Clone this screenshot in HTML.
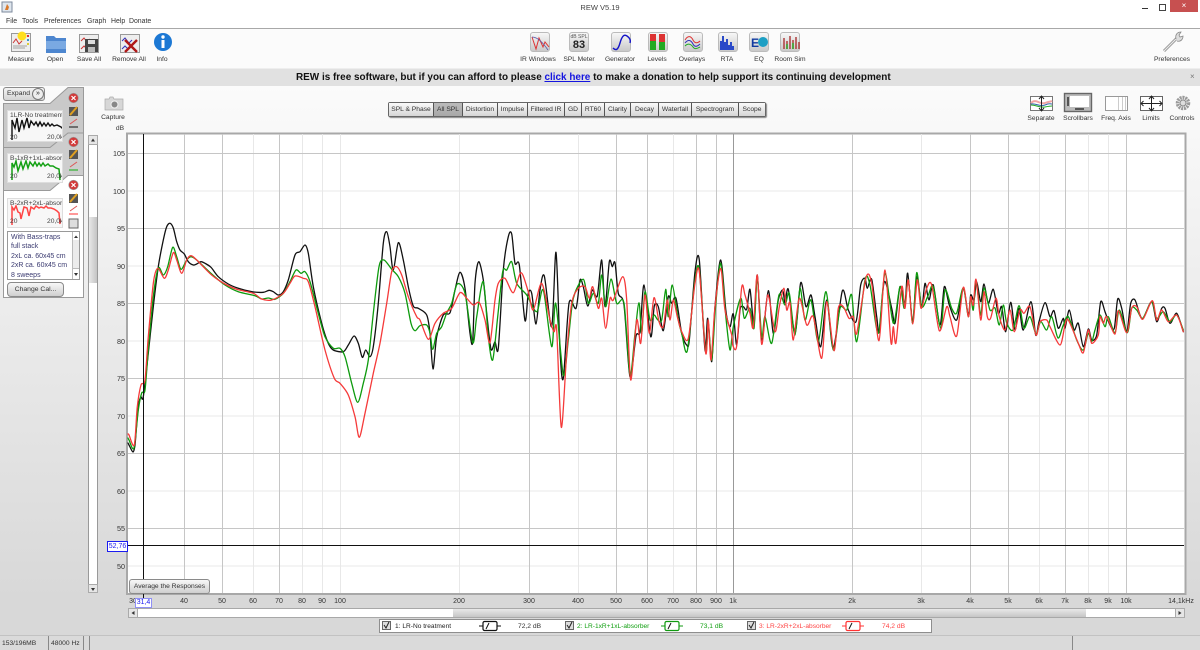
<!DOCTYPE html>
<html><head><meta charset="utf-8"><title>REW V5.19</title>
<style>
html,body{margin:0;padding:0}
html{background:#d8d8d8}
body{width:1200px;height:650px;overflow:hidden;position:relative;font-family:"Liberation Sans",sans-serif;background:linear-gradient(#fbfbfb 85px,#d8d8d8 600px);color:#222;filter:blur(.3px)}
.a{position:absolute}
.t{position:absolute;font-size:6.700px;line-height:9px;white-space:nowrap;color:#333;transform:translateX(-50%)}
.l{position:absolute;font-size:6.700px;line-height:9px;white-space:nowrap;color:#333}
.m{position:absolute;font-size:6.900px;line-height:9px;white-space:nowrap;color:#333;top:17px}
.sq{position:absolute;width:18px;height:18px;border-radius:3px;background:linear-gradient(#f7f7f7,#c9c9c9);border:1px solid #bbb}
.tab{position:absolute;top:103px;height:13px;background:linear-gradient(#fafafa,#d6d6d6);border-right:1px solid #555;font-size:6.700px;line-height:13px;text-align:center;color:#333;box-sizing:border-box;white-space:nowrap;overflow:hidden}
.btn{position:absolute;border:1px solid #8a8a8a;border-radius:3px;background:linear-gradient(#f8f8f8,#cfcfcf);font-size:6.800px;text-align:center;color:#333;box-sizing:border-box;white-space:nowrap}
.ax{position:absolute;font-size:7px;line-height:9px;color:#333;transform:translateX(-50%);top:597px;white-space:nowrap}
.ay{position:absolute;font-size:7.200px;line-height:9px;color:#333;right:1075px;text-align:right}
.thumb{position:absolute;left:7px;width:56px;background:#f7f7f7;border:1px solid #ddd;overflow:hidden;box-sizing:border-box;font-size:6.700px;line-height:9px;color:#444;white-space:nowrap}
.thumb span{position:absolute}
</style></head><body>

<!-- title bar -->
<div class="a" style="left:0;top:0;width:1200px;height:14px;background:#fff"></div>
<svg class="a" style="left:1px;top:1px" width="12" height="12"><rect x="1" y="1" width="10" height="10" fill="#dfe6ee" stroke="#7c8a9c"/><path d="M6 3l2 3-1 3H4l1-3z" fill="#d9792b"/></svg>
<div class="a" style="left:0;width:1200px;top:3px;text-align:center;font-size:7.500px;line-height:10px;color:#444">REW V5.19</div>
<div class="a" style="left:1142px;top:8px;width:6px;height:1px;background:#333"></div>
<div class="a" style="left:1159px;top:4px;width:5px;height:5px;border:1px solid #444"></div>
<div class="a" style="left:1170px;top:0;width:28px;height:12px;background:#c75050;color:#fff;font-size:8px;line-height:11px;text-align:center">×</div>

<!-- menu -->
<div class="a" style="left:0;top:14px;width:1200px;height:14px;background:#fff;border-bottom:1px solid #a8a8a8;box-sizing:content-box"></div>
<div class="m" style="left:6px">File</div>
<div class="m" style="left:22px">Tools</div>
<div class="m" style="left:44px">Preferences</div>
<div class="m" style="left:87px">Graph</div>
<div class="m" style="left:111px">Help</div>
<div class="m" style="left:129px">Donate</div>

<!-- toolbar -->
<div class="a" style="left:0;top:29px;width:1200px;height:39px;background:#fbfbfb"></div>
<svg class="a" style="left:10px;top:31px" width="165" height="24">
 <rect x="1.500" y="2.500" width="19" height="18" fill="#eee" stroke="#999"/><path d="M3 12l3-4 3 5 3-3" fill="none" stroke="#c33"/><path d="M3 15h14M3 17h12" stroke="#888" stroke-width=".7"/><circle cx="12" cy="5" r="4.500" fill="#ffdf1e"/><path d="M18 4v2" stroke="#d33" stroke-width="2"/><path d="M18 8v2" stroke="#39c" stroke-width="2"/><path d="M18 12v2" stroke="#dc3" stroke-width="2"/>
 <path d="M36 5h8l2 2h10v15H36z" fill="#4d86cf"/><path d="M36 10h20v8H36z" fill="#7aa9e2"/>
 <rect x="69.500" y="3.500" width="19" height="18" fill="#eee" stroke="#999"/><path d="M71 10l3-3 3 4 3-3M71 18l3-3 3 3" fill="none" stroke="#c33"/><rect x="75" y="8" width="13" height="13" fill="#444"/><rect x="78" y="9" width="7" height="4" fill="#ddd"/><rect x="78" y="16" width="7" height="5" fill="#bbb"/>
 <rect x="110.500" y="3.500" width="19" height="18" fill="#eee" stroke="#999"/><path d="M112 10l3-3 4 5 3-3M112 18l3-3 3 3 4-3" fill="none" stroke="#33b"/><path d="M115 9l12 12M127 9l-12 12" stroke="#b01818" stroke-width="2.400"/>
 <circle cx="153" cy="11" r="9" fill="#1c78d4"/><circle cx="153" cy="6" r="1.700" fill="#fff"/><rect x="151.500" y="9" width="3" height="8" fill="#fff"/>
</svg>
<div class="t" style="left:21px;top:55px">Measure</div>
<div class="t" style="left:55px;top:55px">Open</div>
<div class="t" style="left:89px;top:55px">Save All</div>
<div class="t" style="left:129px;top:55px">Remove All</div>
<div class="t" style="left:162px;top:55px">Info</div>

<!-- central toolbar -->
<div class="sq" style="left:530px;top:32px"></div>
<div class="sq" style="left:569px;top:32px"></div>
<div class="sq" style="left:611px;top:32px"></div>
<div class="sq" style="left:648px;top:32px"></div>
<div class="sq" style="left:683px;top:32px"></div>
<div class="sq" style="left:718px;top:32px"></div>
<div class="sq" style="left:749px;top:32px"></div>
<div class="sq" style="left:780px;top:32px"></div>
<svg class="a" style="left:530px;top:32px" width="272" height="20">
 <path d="M2 5l4 12 3-11 4 9 2-5 4 5" fill="none" stroke="#d33"/><path d="M2 5c6 0 11 6 16 13" fill="none" stroke="#55a" stroke-width=".8"/>
 <path d="M83 15c3 3 5 2 7-5s4-9 7-7 4 4 3 7" fill="none" stroke="#1414c8" stroke-width="1.400" transform="translate(0 1)"/>
 <rect x="120" y="2" width="6" height="16" fill="#d33"/><rect x="120" y="9" width="6" height="9" fill="#2a2"/><rect x="129" y="2" width="6" height="16" fill="#d33"/><rect x="129" y="10" width="6" height="8" fill="#2a2"/>
 <path d="M155 8c3-5 6-4 8 0s5 3 7 1" fill="none" stroke="#d33"/><path d="M155 11c3-4 6-3 8 1s5 2 7 0" fill="none" stroke="#33b"/><path d="M155 14c3-3 6-2 8 1s5 1 7 0" fill="none" stroke="#2a2"/>
 <path d="M190 18V9h2V4h2v6h2V7h2v6h2v-3h2v4h2v4z" fill="#2a49c8"/>
 <text x="221" y="15" font-family="Liberation Sans" font-weight="bold" font-size="12" fill="#123aa0">E</text><circle cx="233" cy="10" r="5" fill="#1d9fc4"/>
 <path d="M254 17V6M257 17V9M260 17V4M263 17V8M266 17V5M269 17V10" stroke="#a33" stroke-width="1.400"/><path d="M257 17V12M263 17V11" stroke="#2a2" stroke-width="1.400"/>
</svg>
<div class="a" style="left:570px;top:34px;width:18px;text-align:center;font-size:5px;line-height:6px;color:#555;white-space:nowrap">dB SPL</div>
<div class="a" style="left:570px;top:39px;width:18px;text-align:center;font-size:11px;line-height:12px;font-weight:bold;color:#222">83</div>
<div class="t" style="left:538px;top:55px">IR Windows</div>
<div class="t" style="left:579px;top:55px">SPL Meter</div>
<div class="t" style="left:620px;top:55px">Generator</div>
<div class="t" style="left:657px;top:55px">Levels</div>
<div class="t" style="left:692px;top:55px">Overlays</div>
<div class="t" style="left:727px;top:55px">RTA</div>
<div class="t" style="left:759px;top:55px">EQ</div>
<div class="t" style="left:790px;top:55px">Room Sim</div>

<svg class="a" style="left:1160px;top:30px" width="26" height="24"><path d="M4 21L17 8" stroke="#999" stroke-width="3"/><path d="M4 21L17 8" stroke="#eee" stroke-width="1"/><path d="M16 9c-1-4 1-7 5-7l-2 3 1 2 3-1c0 4-3 6-6 5" fill="#ddd" stroke="#888" stroke-width=".8"/></svg>
<div class="t" style="left:1172px;top:55px">Preferences</div>

<!-- donate bar -->
<div class="a" style="left:0;top:68px;width:1200px;height:18px;background:#e1e1e1;border-top:1px solid #eee;box-sizing:border-box"></div>
<div class="a" style="left:296px;top:71px;font-size:9.950px;line-height:13px;font-weight:bold;color:#111;white-space:nowrap">REW is free software, but if you can afford to please <span style="color:#1414e0;text-decoration:underline">click here</span> to make a donation to help support its continuing development</div>
<div class="a" style="left:1190px;top:72px;font-size:8px;line-height:10px;color:#777">×</div>

<!-- side panels -->
<svg class="a" style="left:0;top:85px" width="90" height="216">
 <path d="M3.500 18.500H50L68 2.500H83.500V70H3.500z" fill="#c9c9c9" stroke="#9a9a9a"/>
 <path d="M3.500 62.500H50L68 48H83.500V110H3.500z" fill="#cdcdcd" stroke="#9a9a9a"/>
 <path d="M3.500 105.500H50L68 90.500H83.500V212.500H3.500z" fill="#fff" stroke="#9a9a9a"/>
</svg>
<div class="btn" style="left:3px;top:87px;width:42px;height:14px;line-height:12px;text-align:left;padding-left:3px;background:linear-gradient(#f4f4f4,#d4d4d4)">Expand</div>
<div class="a" style="left:32px;top:88px;width:10px;height:10px;border:1px solid #777;border-radius:50%;font-size:7px;line-height:9px;text-align:center;background:#eee">»</div>

<div class="thumb" style="top:110px;height:32px">
 <svg class="a" style="left:-1px;top:-1px" width="56" height="32" fill="none"><path d="M5 30V10l3 8 2-10 2 14 3-12 2 8 3-10 2 10 2-7 3 4 2-3 2 4 2-4 2 4 2-3 2 3 2-3 2 3 2-2 2 2 3-1 4 2 2 2 1 12" stroke="#111" stroke-width="1.400"/></svg>
 <span style="left:2px;top:0">1LR-No treatment</span><span style="left:2px;top:22px">20</span><span style="left:39px;top:22px">20,0k</span>
</div>
<div class="thumb" style="top:153px;height:30px">
 <svg class="a" style="left:-1px;top:-1px" width="56" height="30" fill="none"><path d="M5 27V10l2 4 2-6 2 10 3-9 2 7 3-8 2 7 2-6 3 4 2-4 2 4 2-3 2 3 2-3 2 3 3-2 2 2 3 0 3 2 3 1 1 11" stroke="#13a013" stroke-width="1.500"/></svg>
 <span style="left:2px;top:0">B-1xR+1xL-absorber</span><span style="left:2px;top:18px">20</span><span style="left:39px;top:18px">20,0k</span>
</div>
<div class="thumb" style="top:198px;height:30px">
 <svg class="a" style="left:-1px;top:-1px" width="56" height="30" fill="none"><path d="M5 27V9l2 3 2-4 2 6 2 1 1 6 3-12 3 1 2 8 2-9 3 2 2-3 3 2 2-1 3 1 2-2 2 2 3 0 3 1 3 2 2 2 1 11" stroke="#f44" stroke-width="1.500"/></svg>
 <span style="left:2px;top:0">B-2xR+2xL-absorber</span><span style="left:2px;top:18px">20</span><span style="left:39px;top:18px">20,0k</span>
</div>
<svg class="a" style="left:68px;top:92px" width="12" height="140">
 <circle cx="5.500" cy="6" r="4.800" fill="#d23a3a" stroke="#999" stroke-width=".6"/><path d="M3.500 4l4 4M7.500 4l-4 4" stroke="#fff" stroke-width="1.200"/>
 <circle cx="5.500" cy="50" r="4.800" fill="#d23a3a" stroke="#999" stroke-width=".6"/><path d="M3.500 48l4 4M7.500 48l-4 4" stroke="#fff" stroke-width="1.200"/>
 <circle cx="5.500" cy="93" r="4.800" fill="#d23a3a" stroke="#999" stroke-width=".6"/><path d="M3.500 91l4 4M7.500 91l-4 4" stroke="#fff" stroke-width="1.200"/>
 <rect x="1" y="15" width="9" height="9" fill="#555"/><path d="M2 23l7-8" stroke="#e0a020" stroke-width="2"/>
 <rect x="1" y="58" width="9" height="9" fill="#555"/><path d="M2 66l7-8" stroke="#e0a020" stroke-width="2"/>
 <rect x="1" y="102" width="9" height="9" fill="#555"/><path d="M2 110l7-8" stroke="#e0a020" stroke-width="2"/>
 <path d="M2 32l7-5" stroke="#d55"/><path d="M1 35h9" stroke="#111"/>
 <path d="M2 75l7-5" stroke="#d55"/><path d="M1 78h9" stroke="#1a1"/>
 <path d="M2 119l7-5" stroke="#d55"/><path d="M1 122h9" stroke="#f33"/>
 <rect x="1" y="127" width="9" height="9" fill="#ddd" stroke="#666"/>
</svg>
<div class="a" style="left:7px;top:231px;width:73px;height:49px;background:#fff;border:1px solid #999;box-sizing:border-box;font-size:7px;line-height:9.400px;color:#3a3a70;padding:1px 0 0 3px;white-space:nowrap">With Bass-traps<br>full stack<br>2xL ca. 60x45 cm<br>2xR ca. 60x45 cm<br>8 sweeps</div>
<div class="a" style="left:72px;top:232px;width:7px;height:47px;background:#fff;border-left:1px solid #bbb;box-sizing:border-box"></div>
<div class="a" style="left:73px;top:240px;width:6px;height:28px;background:#ececec;border-bottom:1px solid #bbb"></div>
<svg class="a" style="left:72px;top:232px" width="8" height="47"><path d="M2 6h4L4 3.500zM2 41h4l-2 3z" fill="#333"/></svg>
<div class="btn" style="left:7px;top:282px;width:57px;height:15px;line-height:14px;border-radius:4px">Change Cal...</div>

<!-- vertical scrollbar -->
<div class="a" style="left:88px;top:135px;width:10px;height:458px;background:#fff;border:1px solid #999;box-sizing:border-box"></div>
<div class="a" style="left:89px;top:217px;width:8px;height:66px;background:linear-gradient(90deg,#e8e8e8,#c4c4c4)"></div>
<div class="a" style="left:88px;top:135px;width:10px;height:10px;background:#e6e6e6;border:1px solid #aaa;box-sizing:border-box"></div>
<div class="a" style="left:88px;top:584px;width:10px;height:9px;background:#e6e6e6;border:1px solid #aaa;box-sizing:border-box"></div>
<svg class="a" style="left:88px;top:135px" width="10" height="458"><path d="M3 6.500h4L5 3.500zM3 453h4l-2 3z" fill="#333"/></svg>

<!-- capture -->
<svg class="a" style="left:104px;top:96px" width="20" height="15"><path d="M1 3h4l1-2h3l1 2h9v11H1z" fill="#d7d7d7" stroke="#aaa" stroke-width=".7"/><circle cx="10.500" cy="8.500" r="3.500" fill="#888" stroke="#eee"/></svg>
<div class="t" style="left:113px;top:113px">Capture</div>
<div class="t" style="left:120px;top:124px">dB</div>

<!-- tabs -->
<div class="a" style="left:388px;top:102px;width:378px;height:15px;background:#666;border-radius:2px;box-shadow:1px 1px 1px #888"></div>
<div class="tab" style="left:389px;width:45px">SPL &amp; Phase</div>
<div class="tab" style="left:434px;width:29px;background:linear-gradient(#bbb,#a8a8a8)">All SPL</div>
<div class="tab" style="left:463px;width:35px">Distortion</div>
<div class="tab" style="left:498px;width:30px">Impulse</div>
<div class="tab" style="left:528px;width:37px">Filtered IR</div>
<div class="tab" style="left:565px;width:17px">GD</div>
<div class="tab" style="left:582px;width:23px">RT60</div>
<div class="tab" style="left:605px;width:26px">Clarity</div>
<div class="tab" style="left:631px;width:28px">Decay</div>
<div class="tab" style="left:659px;width:33px">Waterfall</div>
<div class="tab" style="left:692px;width:47px">Spectrogram</div>
<div class="tab" style="left:739px;width:26px;border-right:0">Scope</div>

<!-- right tool icons -->
<svg class="a" style="left:1028px;top:92px" width="170" height="22" fill="none">
 <rect x="2.500" y="4.500" width="22" height="14" fill="#fff" stroke="#777"/><path d="M3 11c5-5 9 2 14 0s5-1 7-2" stroke="#f2a4a4" stroke-width="2"/><path d="M3 12c5-1 9 3 14 1s5-1 7-1" stroke="#36a" stroke-width="1"/><path d="M3 13c5 0 9 3 14 2s5-1 7-1" stroke="#2a2"/><path d="M13.500 4v15M11 7l2.500-3L16 7M11 16l2.500 3 2.500-3" stroke="#222"/>
 <rect x="36.500" y="1.500" width="27" height="18" fill="#bbb" stroke="#666" stroke-width="1.400"/><rect x="42" y="4" width="19" height="11" fill="#fff"/><rect x="39" y="5" width="2" height="9" fill="#555"/><rect x="47" y="16" width="9" height="2" fill="#555"/>
 <rect x="77.500" y="4.500" width="22" height="14" fill="#fff" stroke="#999"/><path d="M90.500 5v13M94.500 5v13M97.500 5v13" stroke="#ccc"/>
 <rect x="112.500" y="4.500" width="22" height="14" fill="#fff" stroke="#666"/><path d="M123.500 5v13M113 11.500h21M121 7l2.500-3 2.500 3M121 16l2.500 3 2.500-3M115.500 9l-2.500 2.500 2.500 2.500M131.500 9l2.500 2.500-2.500 2.500" stroke="#222"/>
 <circle cx="155" cy="11" r="5.500" stroke="#9a9a9a" stroke-width="3.500" stroke-dasharray="2 .8"/><circle cx="155" cy="11" r="3" fill="#ddd" stroke="#888"/>
</svg>
<div class="t" style="left:1041px;top:114px">Separate</div>
<div class="t" style="left:1078px;top:114px">Scrollbars</div>
<div class="t" style="left:1116px;top:114px">Freq. Axis</div>
<div class="t" style="left:1151px;top:114px">Limits</div>
<div class="t" style="left:1182px;top:114px">Controls</div>

<!-- plot -->
<svg class="a" id="plot" style="left:0;top:0" width="1200" height="650" fill="none">
 <rect x="127" y="133.500" width="1058.500" height="460.500" fill="#fff" stroke="#a8a8a8" stroke-width="2"/>
 <g stroke="#f0f0f0" stroke-width="1.500"><path d="M128 191H1184M128 266H1184M128 341H1184M128 416H1184M128 491H1184M128 566H1184"/></g>
 <g stroke="#e8e8e8" stroke-width="1"><path d="M253.500 134V593M302.500 134V593M322.500 134V593M340.500 134V593M459.500 134V593M578.500 134V593M673.500 134V593M921.500 134V593M1039.500 134V593M1088.500 134V593M1108.500 134V593"/></g>
 <g stroke="#c6c6c6" stroke-width="1"><path d="M184.500 134V593M222.500 134V593M279.500 134V593M529.500 134V593M616.500 134V593M647.500 134V593M696.500 134V593M716.500 134V593M852.500 134V593M970.500 134V593M1008.500 134V593M1065.500 134V593M1126.500 134V593M128 153.500H1184M128 228.500H1184M128 303.500H1184M128 378.500H1184M128 453.500H1184M128 528.500H1184"/><path d="M733.500 134V593" stroke="#999"/></g>

 <g stroke-linejoin="round" stroke-linecap="round" stroke-width="1.300">
 <polyline stroke="#111" points="128,443 130,447 133,452 135,445 137,420 139,402 141,397 143.300,396.700 148.300,353 153.300,306.700 158.300,266.700 163.300,240 166.700,226.700 170,223.300 173.300,228 176.700,241.700 180,250 184.300,254 188.300,261.700 193.300,265 196.700,264 201,261.700 205,263.300 211,267.300 218.300,276.700 228.300,284 238.300,288.300 251.700,291.700 263.300,292.300 269,290.300 273.300,291.700 278.300,295 283.300,291.700 288.300,280 295,255 300,251.700 305,245 308.300,253.300 313.300,286.700 321.700,323.300 328.300,343.300 333.300,350 343.300,351.700 348.300,345 354,336 358.300,343.300 362.300,357.300 365.700,350 370,356.700 373.300,346.700 378.300,303.300 383.300,243.300 386.700,231.700 390,246.700 393.300,270 398.300,242.700 403.300,260 408.300,286.700 413.300,306 418.300,308.300 426.700,315 430,333.300 433,369 436.700,336.700 443.300,315 450,312.700 455,290 460,272.300 465,288.300 470,333.300 472.700,341.700 475,283.300 478.700,261.700 483.300,280 486.700,313.300 491,349.300 495,341.700 498.300,348.300 503.300,270 508.300,236.700 511.700,234 515,263.300 519.300,265 525,320.700 528.300,293.300 531.700,293.300 536,324 540,290 544.300,276 551.700,326.700 556,252.300 560,350 563.300,378.300 569,303.300 576,308.300 580,280 583.300,286.700 587.700,306 592.300,290 597.300,296 601.700,260 605,306.700 609.300,261.700 612.300,266.700 615,262.700 618.300,293.300 624,305 630,376.700 636,336 640,331.700 644,285 650.700,336.700 654.300,306 658.300,306.700 663.300,330.700 668.300,296.700 671.700,303.300 676,298.300 681.700,333.300 686.700,345 689.300,340 695,271.700 699.300,260 705,350 707.700,318.300 711.700,361.700 715,306.700 720.700,260 726,311.700 730,326.700 733.300,314 736.700,345 740,310 743.300,306.700 746.700,309.300 750,289.300 754,325 757.300,275 761.700,340 768.300,290.700 773.300,333.300 778.300,300 782.700,290 785,303 788.300,289.300 795,333.300 800.700,282.700 806,306.700 811,295 815,316.700 820.700,346.700 826.700,300 833.300,348.300 842.300,291 848.300,310 856,321.700 860.700,285 865,278.300 867.300,288.300 871.700,279.300 876.700,316.700 879.300,331.700 884.300,281.700 891.700,308.300 895,323.300 900,286.700 905,303.300 907.700,273.300 912.700,321.700 916.700,276.700 921.700,306.700 925,283.300 929,300 933.300,285 940,325 944.300,286.700 949.300,305 956.700,320 963.300,288.300 968.300,315 970.700,295 974,300 976.700,281.700 980.700,301.700 984,284 988.300,303.300 993.300,289.300 998.300,313.300 1001.700,306.700 1005.700,331.700 1010.700,302.300 1015,330 1019,308.300 1023.300,330 1031,301.700 1035.700,335 1039,321.700 1045,302.700 1050,316.700 1054,310.700 1058.300,328.300 1063.300,318.300 1065,328 1069.300,310 1074,330 1078.300,323.300 1083.300,346.700 1088.300,329 1091.700,340 1096.700,335 1100.700,301.700 1105,311.700 1110,325 1114.300,328.300 1117.700,299 1121.700,308.300 1126.700,331.700 1130.700,303.300 1135,300 1140,315 1143.300,318.300 1151.700,301.700 1156.700,321.700 1161.700,308.300 1165,308.300 1170,323.300 1176.700,313.300 1183.300,331.700"/>
 <polyline stroke="#0d9a0d" points="128,438 129,440 134,448 138.300,410 141.700,393 145,390 148.300,350 153.300,296.700 158.300,268 163.300,275 167.700,266.700 172.700,247.300 176.700,256.700 181,269.300 186.700,260 191,256.700 196.700,260 211.700,274 225,285 238.300,291.700 255,295.700 261.700,299 268.300,298 275,299.300 283.300,293.300 290,281.700 296,270 301,273.300 305,271.700 310,281.700 318.300,313.300 325,336.700 333.300,348.300 340,348.300 345,356.700 351.700,383.300 357.700,402.300 363.300,383.300 368.300,360 373.300,313.300 379,266.700 384,260 391.700,269.300 398.300,276.700 405,293.300 411,323.300 415,330.700 420,325.700 426.700,325 430,333 432.700,349.300 436.700,333.300 441.700,326.700 446.700,313 451.700,303.300 457.300,284 465,293.300 472.700,342.700 476.700,316.700 483.300,281.700 488.300,336.700 492.700,360 497.700,316.700 502.700,271.700 506.700,270 511.700,261.700 516.700,283.300 526.700,295 536.700,311.700 543.300,290 551.700,346.700 555.700,303.300 563.300,375 568.300,340 573.300,298.300 583.300,279.300 588.300,303.300 593.300,293.300 598.300,303.300 601.700,275 605.700,306.700 611,279 616.700,303.300 624,303.300 630,375 635,333.300 639,302.700 641.700,333.300 645,291.700 650,320 654.300,315 657.300,319.300 661.700,320 665.700,289.300 668.300,316.700 672.300,285 678.300,320 681.700,333.300 687.300,350.700 695,280 699.300,270 705.700,351.700 708.300,323.300 711.700,360 715.700,305 720.700,263.300 726,318.300 730,350 733.300,326.700 740.700,298.300 744.300,318.300 750,308.300 754,328.300 757.300,278.300 761.700,336.700 765,316.700 771.700,343.300 779,295 785,305 789.300,293.300 795,335 800,288.300 805,320 811,300 818.300,341.700 826,291.700 833.300,350 840,308.300 846.700,310 851.700,295 856.700,341.700 865,280 870,285 878.300,333.300 885,273.300 893.300,323.300 900,286.700 904.300,308.300 908.300,280 912.700,323.300 916.700,272.700 921.700,306.700 928.300,295 933.300,286.700 940.700,328.300 945,290 951.700,308.300 956.700,313 963.300,288 968.300,316.700 970.700,296.700 973.300,310 976,280 980.700,315 984,288 990,310 995,308 999.300,325 1003.300,305 1006.700,323 1013,330 1019,305.700 1024,328 1030,316.700 1036,334 1040.700,321.700 1046.700,330 1051.700,316.700 1058,338 1063.300,325 1068.300,316.700 1076.700,340 1083.300,350 1088.300,333.300 1091.700,341.700 1095,330 1100,315 1105,326.700 1108.300,316.700 1115,333 1119.300,310 1127.300,332.700 1131.700,308.300 1136.700,310 1142.700,318.300 1151.700,301.700 1156.700,318.300 1163.300,311.700 1170,321.700 1176.700,315 1183.300,330"/>
 <polyline stroke="#f53a3a" points="128,434 129,435 134.300,445 137.300,406.700 141,385 145,380 148.300,336.700 153.300,283.300 157.700,268.300 164.300,278.300 168.300,270 173.300,252.700 176.700,260 181.700,273.300 186.700,260 191,255.700 196.700,260 211.700,275 225,284 236.700,289.300 253.300,293.300 261.700,299 271.700,300 283.300,293.300 290,283.300 295,276 303.300,278.300 308.300,281.700 315,306.700 325,350 334.300,378.300 340,383.300 348.300,395 355,416.700 359.300,437.300 365,413.300 373.300,373.300 380,343.300 386.700,303.300 391.700,271.700 396.700,266.700 401.700,275 408.300,296.700 416.700,316.700 420,320 428.300,339.300 435,323.300 443.300,313.300 451.700,308.300 460,292.700 466.700,298.300 473.300,305 479.300,302.700 485,320 490,342.700 495,300 498.300,283.300 505,278.300 513.300,292.700 521,272.700 528.300,291.700 533.300,310 541.700,283.300 550,320 554,331.700 556.700,330 561.300,427.300 566.700,353.300 571.700,303.300 578.300,288.300 585,286.700 589.300,298.300 592.700,286.700 598.300,308.300 601.700,298.300 605.700,328.300 610,298.300 613.300,300 622.700,276.700 626.700,300 630.700,380 636.700,320 640.700,343.300 645,295 649.300,333.300 654,297.700 659,321.700 663.300,326.700 667.300,300 670,320 673.300,300 677.300,316.700 681.700,331.700 688.300,338.300 695,283.300 699.300,271.700 705.700,353.300 708.300,320 711,360 715,306.700 720.700,268.300 725,310 731.700,335 732.700,345 736.700,346 741.700,287.300 745,295 750,313.300 753.300,327.300 757.300,275 761.700,344.300 767.700,295 775,331.700 779.300,306.700 784,288.300 786.700,310 790,303 793.300,340 799.300,298.300 806.700,325 813.300,316.700 821.700,358.300 826.700,301.700 834,350.700 838.300,308.300 843.300,306.700 849,318.300 853.300,316.700 856.700,333.300 866,277.700 871.700,283.300 879,340.700 885,270 891,342.700 893.300,326.700 896,342.700 901.700,286.700 905,308.300 908.300,280 912.700,324 917.300,280 921,308.300 926.700,288.300 931.700,285 939.300,330.700 946.700,306.700 950,316.700 956.700,336 963.300,287.300 968.300,316.700 970.700,296.700 973.300,305 976,279.300 980.700,320 984,291.700 987.300,316.700 990.700,318 996,298 999.300,316.700 1005,330 1010,310 1014.300,331.700 1020,310 1024,313.300 1030,306.700 1036,335 1040,321.700 1046.700,320 1050,326.700 1060,345 1065,325 1068.300,320 1078.300,343.300 1083.300,352.700 1088.300,330 1091.700,343.300 1098.300,335 1100,316.700 1103.300,323.300 1106.700,316.700 1115,334 1118.300,310.700 1126.700,332.700 1131.700,308.300 1136.700,306.700 1142.700,319.300 1152.300,300.700 1156.700,320 1161.700,310 1168.300,321.700 1176.700,315 1183.300,331.700"/>
 </g>
 <path d="M143.500 134V599M127 545.500H1184" stroke="#111"/>
</svg>
<script>
document.querySelectorAll('#plot polyline').forEach(function(pl){
 var p=pl.getAttribute('points').trim().split(/\s+/).map(function(s){return s.split(',').map(Number)}),d='M'+p[0];
 for(var i=0;i<p.length-1;i++){var a=p[Math.max(i-1,0)],b=p[i],c=p[i+1],e=p[Math.min(i+2,p.length-1)],k=7;
  d+='C'+(b[0]+(c[0]-a[0])/k).toFixed(1)+' '+(b[1]+(c[1]-a[1])/k).toFixed(1)+' '+(c[0]-(e[0]-b[0])/k).toFixed(1)+' '+(c[1]-(e[1]-b[1])/k).toFixed(1)+' '+c[0]+' '+c[1];}
 var s=document.createElementNS('http://www.w3.org/2000/svg','path');s.setAttribute('d',d);s.setAttribute('stroke',pl.getAttribute('stroke'));pl.parentNode.replaceChild(s,pl);
});
</script>

<!-- y axis labels -->
<div class="ay" style="top:149px">105</div><div class="ay" style="top:187px">100</div><div class="ay" style="top:224px">95</div><div class="ay" style="top:262px">90</div><div class="ay" style="top:299px">85</div><div class="ay" style="top:337px">80</div><div class="ay" style="top:374px">75</div><div class="ay" style="top:412px">70</div><div class="ay" style="top:449px">65</div><div class="ay" style="top:487px">60</div><div class="ay" style="top:524px">55</div><div class="ay" style="top:562px">50</div>
<div class="a" style="left:107px;top:541px;width:19px;height:9px;background:#fff;border:1px solid #1c1cf0;box-sizing:content-box;font-size:7px;line-height:9px;color:#1c1cf0;text-align:center">52,76</div>

<div class="btn" style="left:129px;top:579px;width:81px;height:15px;line-height:14px;border-radius:3px;font-size:6.700px">Average the Responses</div>

<!-- x axis labels -->
<div class="ax" style="left:133px">30</div>
<div class="a" style="left:135px;top:598px;width:15px;height:8px;background:#fff;border:1px solid #8f8ff5;font-size:7px;line-height:8px;color:#1c1cf0;text-align:center">31,4</div>
<div class="ax" style="left:184px">40</div><div class="ax" style="left:222px">50</div><div class="ax" style="left:253px">60</div><div class="ax" style="left:279px">70</div><div class="ax" style="left:302px">80</div><div class="ax" style="left:322px">90</div><div class="ax" style="left:340px">100</div><div class="ax" style="left:459px">200</div><div class="ax" style="left:529px">300</div><div class="ax" style="left:578px">400</div><div class="ax" style="left:616px">500</div><div class="ax" style="left:647px">600</div><div class="ax" style="left:673px">700</div><div class="ax" style="left:696px">800</div><div class="ax" style="left:716px">900</div><div class="ax" style="left:733px">1k</div><div class="ax" style="left:852px">2k</div><div class="ax" style="left:921px">3k</div><div class="ax" style="left:970px">4k</div><div class="ax" style="left:1008px">5k</div><div class="ax" style="left:1039px">6k</div><div class="ax" style="left:1065px">7k</div><div class="ax" style="left:1088px">8k</div><div class="ax" style="left:1108px">9k</div><div class="ax" style="left:1126px">10k</div>
<div class="ax" style="left:1181px">14,1kHz</div>

<!-- horizontal scrollbar -->
<div class="a" style="left:128px;top:608px;width:1057px;height:10px;background:#fff;border:1px solid #a8a8a8;box-sizing:border-box"></div>
<div class="a" style="left:453px;top:609px;width:633px;height:8px;background:linear-gradient(#e8e8e8,#c6c6c6)"></div>
<div class="a" style="left:128px;top:608px;width:10px;height:10px;background:#e6e6e6;border:1px solid #aaa;box-sizing:border-box"></div>
<div class="a" style="left:1175px;top:608px;width:10px;height:10px;background:#e6e6e6;border:1px solid #aaa;box-sizing:border-box"></div>
<svg class="a" style="left:128px;top:608px" width="1057" height="10"><path d="M6.500 3v4L3.500 5zM1050.500 3v4l3-2z" fill="#333"/></svg>

<!-- legend -->
<div class="a" style="left:379px;top:619px;width:553px;height:14px;background:#fff;border:1px solid #8e8e8e;box-sizing:border-box"></div>
<svg class="a" style="left:380px;top:619px" width="552" height="14" fill="none">
 <rect x="2.500" y="2.500" width="8" height="8" fill="#ddd" stroke="#666"/><path d="M4 6l2 3 3-6" stroke="#222"/>
 <rect x="185.500" y="2.500" width="8" height="8" fill="#ddd" stroke="#666"/><path d="M187 6l2 3 3-6" stroke="#222"/>
 <rect x="367.500" y="2.500" width="8" height="8" fill="#ddd" stroke="#666"/><path d="M369 6l2 3 3-6" stroke="#222"/>
 <rect x="103" y="2.500" width="14" height="9" rx="1.500" stroke="#111" stroke-width="1.200"/><path d="M99 7h4M117 7h4M106 10l3-6" stroke="#111"/>
 <rect x="285" y="2.500" width="14" height="9" rx="1.500" stroke="#109a10" stroke-width="1.200"/><path d="M281 7h4M299 7h4" stroke="#109a10"/><path d="M288 10l3-6" stroke="#111"/>
 <rect x="466" y="2.500" width="14" height="9" rx="1.500" stroke="#f33" stroke-width="1.200"/><path d="M462 7h4M480 7h4" stroke="#f33"/><path d="M469 10l3-6" stroke="#111"/>
</svg>
<div class="l" style="left:395px;top:622px;color:#222;font-size:6.600px">1: LR-No treatment</div>
<div class="l" style="left:518px;top:622px;color:#333">72,2 dB</div>
<div class="l" style="left:577px;top:622px;color:#13a013;font-size:6.600px">2: LR-1xR+1xL-absorber</div>
<div class="l" style="left:700px;top:622px;color:#13a013">73,1 dB</div>
<div class="l" style="left:759px;top:622px;color:#f44;font-size:6.600px">3: LR-2xR+2xL-absorber</div>
<div class="l" style="left:882px;top:622px;color:#f44">74,2 dB</div>

<!-- status bar -->
<div class="a" style="left:0;top:635px;width:1200px;height:15px;background:#dadada;border-top:1px solid #c2c2c2;box-sizing:border-box"></div>
<div class="l" style="left:2px;top:639px">153/196MB</div>
<div class="l" style="left:51px;top:639px">48000 Hz</div>
<div class="a" style="left:48px;top:636px;width:1px;height:14px;background:#888"></div>
<div class="a" style="left:83px;top:636px;width:1px;height:14px;background:#888"></div>
<div class="a" style="left:89px;top:636px;width:1px;height:14px;background:#888"></div>
<div class="a" style="left:1072px;top:636px;width:1px;height:14px;background:#888"></div>

</body></html>
